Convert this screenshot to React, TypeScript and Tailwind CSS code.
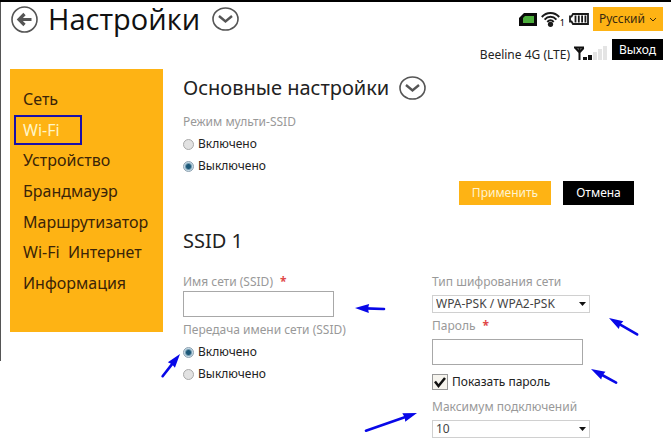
import React from 'react';

const menu = ['Сеть', 'Wi-Fi', 'Устройство', 'Брандмауэр', 'Маршрутизатор', 'Wi-Fi  Интернет', 'Информация'];

function ChevronCircle() {
  return (
    <svg viewBox="0 0 27 24" className="h-6 w-[27px] shrink-0" fill="none" stroke="#555">
      <ellipse cx="13.5" cy="12" rx="12.5" ry="11" strokeWidth="1.6" />
      <path d="M7 9l6.5 5.5L20 9" strokeWidth="2.4" />
    </svg>
  );
}

function BackIcon() {
  return (
    <svg viewBox="0 0 27 27" className="size-[27px]" fill="none" stroke="#555">
      <circle cx="13.5" cy="13.5" r="12.5" strokeWidth="1.6" />
      <path d="M20.5 13.5H8M13.5 8l-5.5 5.5 5.5 5.5" strokeWidth="3.2" />
    </svg>
  );
}

function SimIcon() {
  return (
    <svg viewBox="0 0 18 13" className="h-[13px] w-[18px]">
      <path d="M5 0h13v13H0V5z" fill="#0a0a0a" />
      <path d="M6 3h9v7H4V5z" fill="#4cae3c" />
    </svg>
  );
}

function WifiIcon() {
  return (
    <svg viewBox="0 0 19 15" className="h-[15px] w-[19px]" fill="none" stroke="#1a1a1a" strokeWidth="2">
      <path d="M.8 5C5.5-.2 13.5-.2 18.2 5" />
      <path d="M3.6 7.6C7 3.9 12 3.9 15.4 7.6" />
      <path d="M6.3 10C8.3 7.8 10.700 7.8 12.7 10" />
      <circle cx="9.5" cy="12.3" r="2.6" fill="#1a1a1a" stroke="none" />
    </svg>
  );
}

function BatteryIcon() {
  return (
    <svg viewBox="0 0 20 12" className="h-3 w-5" fill="none" stroke="#1a1a1a">
      <path d="M4 1h15v10H4L2.5 8.5H1v-5h1.5z" strokeWidth="1.8" />
      <path d="M6.5 2.5v7M9.8 2.5v7M13.1 2.5v7M16.4 2.5v7" strokeWidth="1.8" />
    </svg>
  );
}

function SignalIcon() {
  return (
    <svg viewBox="0 0 34 15" className="h-[15px] w-[34px]">
      <path d="M0 1.5h10M1.5 2l4 4.5 4-4.5M5.5 1v13" fill="none" stroke="#111" strokeWidth="2" />
      <path d="M9 11h4v3H9zM14 9h4v5h-4z" fill="#111" />
      <path d="M19 6h4v8h-4zM24 3h4v11h-4zM29 0h4v14h-4z" fill="#e4e4e4" />
    </svg>
  );
}

function Header() {
  return (
    <header className="flex justify-between pl-[11px] pr-2">
      <div className="flex h-[34px] items-center font-['Open_Sans',sans-serif]">
        <button type="button" aria-label="Назад">
          <BackIcon />
        </button>
        <h1 className="ml-[10px] mr-3 text-[29px] leading-8 text-[#111]">Настройки</h1>
        <button type="button" aria-label="Развернуть настройки">
          <ChevronCircle />
        </button>
      </div>
      <div className="flex flex-col items-end gap-2 pt-[5px]">
        <div className="flex items-center">
          <SimIcon />
          <div className="ml-1 flex items-end">
            <WifiIcon />
            <span className="text-[9px] leading-2">1</span>
          </div>
          <div className="ml-1">
            <BatteryIcon />
          </div>
          <button type="button" className="ml-1 flex h-6 w-[70px] items-center justify-center gap-1 bg-[#feb314] text-[12px] text-[#3a2a10]">
            Русский
            <svg viewBox="0 0 8 5" className="h-[5px] w-2" fill="none" stroke="currentColor">
              <path d="M1 1l3 3 3-3" />
            </svg>
          </button>
        </div>
        <div className="flex items-start">
          <span className="mr-1 mt-2 text-[12px] leading-4 text-[#222]">Beeline 4G (LTE)</span>
          <div className="mt-[7px]">
            <SignalIcon />
          </div>
          <button type="button" className="ml-1 h-[21px] w-[51px] bg-black text-[12px] text-white">
            Выход
          </button>
        </div>
      </div>
    </header>
  );
}

function Sidebar() {
  return (
    <nav className="w-[153px] shrink-0 self-start bg-[#feb314] pb-[34px] pt-[15px]">
      <ul className="grid h-[214px] grid-rows-7 text-[16px] text-[#3a2408]">
        {menu.map((item) => (
          <li key={item} className="relative flex items-center pl-[13px]">
            <a href="#" className={item === 'Wi-Fi' ? 'text-[#fff6c8]' : 'whitespace-pre'}>
              {item}
            </a>
            {item === 'Wi-Fi' && <span className="absolute inset-y-0 left-1 w-[68px] border-2 border-[#1a0fa8]" />}
          </li>
        ))}
      </ul>
    </nav>
  );
}

function Radio({ name, label, checked }: { name: string; label: string; checked?: boolean }) {
  return (
    <label className="flex h-[22px] items-center gap-1 text-[12px] text-[#222]">
      <input
        type="radio"
        name={name}
        defaultChecked={checked}
        className="size-[11px] appearance-none rounded-full border border-[#aaa] bg-[#e2e2e2] checked:border-[#8fa3b2] checked:bg-[radial-gradient(circle,#1c5878_0_2px,#c5dae6_4px)]"
      />
      {label}
    </label>
  );
}

function Select({ id, value }: { id: string; value: string }) {
  return (
    <div className="relative w-[158px]">
      <select id={id} className="block h-[18px] w-full appearance-none border border-[#d0d0d0] bg-white pl-[3px] text-[12px] leading-4 text-[#444]">
        <option>{value}</option>
      </select>
      <svg viewBox="0 0 7 4" className="pointer-events-none absolute right-1 top-[7px] h-1 w-[7px]">
        <path d="M0 0h7L3.5 4z" fill="#111" />
      </svg>
    </div>
  );
}

function Star() {
  return <span className="ml-1 font-bold text-[#e04848]">*</span>;
}

// pointers drawn over the form
function Arrows() {
  const arrows = [
    [385, 309, 355, 308],
    [162, 377, 180, 354],
    [638, 335, 609, 318],
    [617, 383, 591, 369],
    [365, 431, 417, 413],
  ];
  return (
    <svg width="671" height="447" className="pointer-events-none absolute left-0 top-0" aria-hidden="true">
      {arrows.map(([x1, y1, x2, y2]) => {
        const length = Math.hypot(x2 - x1, y2 - y1);
        const angle = (Math.atan2(y2 - y1, x2 - x1) * 180) / Math.PI;
        return (
          <g key={x1} transform={`translate(${x2} ${y2 - 2}) rotate(${angle})`}>
            <path d={`M${-length + 1} 0H-10`} stroke="#0808e8" strokeWidth="2.6" strokeLinecap="round" />
            <path d="M0 0l-14-4.5 1 4.5-1 4.5z" fill="#0808e8" />
          </g>
        );
      })}
    </svg>
  );
}

export default function App() {
  const label = 'block text-[12px] leading-4 text-[#999]';
  const field = 'block h-[26px] w-[151px] border border-[#a8a8a8] px-1 text-[12px]';
  return (
    <div className="relative min-h-screen border-t-2 border-black bg-white font-['Noto_Sans',sans-serif]">
      <span className="absolute left-0 top-0 h-[359px] w-px bg-[#555]" />
      <Header />
      <div className="flex gap-5 pl-[10px] pr-[37px] pt-[6px]">
        <Sidebar />
        <main className="min-w-0 flex-1 pt-[3px]">
          <div className="flex h-8 items-center gap-[10px]">
            <h2 className="text-[20px] leading-8 text-[#222]">Основные настройки</h2>
            <button type="button" aria-label="Развернуть основные настройки">
              <ChevronCircle />
            </button>
          </div>
          <fieldset className="mt-[10px]">
            <legend className={label}>Режим мульти-SSID</legend>
            <div className="pt-[3px]">
              <Radio name="multi" label="Включено" />
              <Radio name="multi" label="Выключено" checked />
            </div>
          </fieldset>
          <div className="mt-1 flex justify-end gap-3 text-[12px]">
            <button type="button" className="h-6 w-[92px] bg-[#feb314] text-[#fff3d0]">
              Применить
            </button>
            <button type="button" className="h-6 w-[71px] bg-black text-white">
              Отмена
            </button>
          </div>
          <h2 className="mt-5 text-[20px] leading-8 text-[#222]">SSID 1</h2>
          <div className="mt-[17px] grid grid-cols-[249px_1fr]">
            <div>
              <label htmlFor="ssid" className={label}>
                Имя сети (SSID) <Star />
              </label>
              <input id="ssid" type="text" className={`${field} mt-px`} />
              <fieldset className="mt-[5px]">
                <legend className={label}>Передача имени сети (SSID)</legend>
                <div className="pt-[3px]">
                  <Radio name="broadcast" label="Включено" checked />
                  <Radio name="broadcast" label="Выключено" />
                </div>
              </fieldset>
            </div>
            <div>
              <label htmlFor="cipher" className={label}>
                Тип шифрования сети
              </label>
              <div className="mt-[5px]">
                <Select id="cipher" value="WPA-PSK / WPA2-PSK" />
              </div>
              <label htmlFor="password" className={`${label} mt-[5px]`}>
                Пароль <Star />
              </label>
              <input id="password" type="text" className={`${field} mt-[5px]`} />
              <label className="mt-[9px] flex h-4 items-center gap-1 text-[12px] text-[#222]">
                <span className="relative size-4">
                  <input type="checkbox" defaultChecked className="peer block size-4 appearance-none border border-[#999] bg-[#f6f4ee]" />
                  <svg viewBox="0 0 16 16" className="pointer-events-none absolute inset-0 hidden peer-checked:block">
                    <path d="M3 7.5l3.5 4.5 6.5-8" fill="none" stroke="#111" strokeWidth="2.5" />
                  </svg>
                </span>
                Показать пароль
              </label>
              <label htmlFor="limit" className={`${label} mt-[9px]`}>
                Максимум подключений
              </label>
              <div className="mt-[5px]">
                <Select id="limit" value="10" />
              </div>
            </div>
          </div>
        </main>
      </div>
      <Arrows />
    </div>
  );
}
